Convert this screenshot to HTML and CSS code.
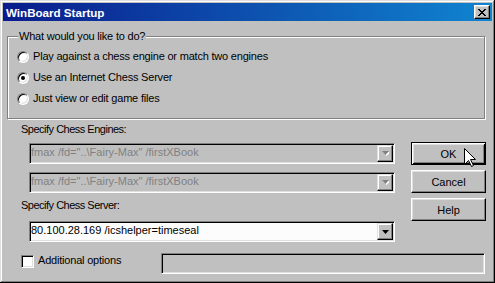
FILE: index.html
```html
<!DOCTYPE html>
<html lang="en">
<head>
  <meta charset="UTF-8">
  <title>WinBoard Startup</title>
  <link rel="stylesheet" href="styles.css">
</head>
<body>
  <div class="window">
    <div class="titlebar">
      <span class="title">WinBoard Startup</span>
      <button class="close">
        <svg width="8" height="7" viewBox="0 0 8 7"><path d="M0 0h2v1h-2zM6 0h2v1h-2zM1 1h2v1h-2zM5 1h2v1h-2zM2 2h4v1h-4zM3 3h2v1h-2zM2 4h4v1h-4zM1 5h2v1h-2zM5 5h2v1h-2zM0 6h2v1h-2zM6 6h2v1h-2z" fill="#000"/></svg>
      </button>
    </div>

    <!-- mode choice -->
    <div class="group">
      <div class="legend">What would you like to do?</div>
      <div class="radio-row"><span class="radio"></span>Play against a chess engine or match two engines</div>
      <div class="radio-row"><span class="radio checked"></span>Use an Internet Chess Server</div>
      <div class="radio-row"><span class="radio"></span>Just view or edit game files</div>
    </div>

    <div class="lower">
      <div class="fields">
        <div class="caption">Specify Chess Engines:</div>
        <div class="combo disabled first">
          <span class="combo-text">fmax /fd="..\Fairy-Max" /firstXBook</span>
          <span class="drop"><svg width="7" height="5" viewBox="0 0 7 5"><path d="M1 1h7l-3.5 4z" fill="#fff"/><path d="M0 0h7l-3.5 4z" fill="#808080"/></svg></span>
        </div>
        <div class="combo disabled">
          <span class="combo-text">fmax /fd="..\Fairy-Max" /firstXBook</span>
          <span class="drop"><svg width="7" height="5" viewBox="0 0 7 5"><path d="M1 1h7l-3.5 4z" fill="#fff"/><path d="M0 0h7l-3.5 4z" fill="#808080"/></svg></span>
        </div>
        <div class="caption second">Specify Chess Server:</div>
        <div class="combo server">
          <span class="combo-text">80.100.28.169 /icshelper=timeseal</span>
          <span class="drop"><svg width="7" height="4" viewBox="0 0 7 4"><path d="M0 0h7l-3.5 4z" fill="#000"/></svg></span>
        </div>
      </div>
      <div class="buttons">
        <button class="btn default">OK</button>
        <button class="btn">Cancel</button>
        <button class="btn">Help</button>
      </div>
    </div>

    <div class="options">
      <span class="check"></span>
      <span class="check-label">Additional options</span>
      <div class="edit"></div>
    </div>

    <!-- mouse pointer over OK -->
    <svg class="cursor" width="12" height="20" viewBox="0 0 12 20">
      <path d="M0.5 0.5V16.5L4.5 12.5L7.5 18.5L9.5 17.5L6.5 11.5H11.5Z" fill="#fff" stroke="#000" stroke-width="1"/>
    </svg>
  </div>
</body>
</html>
```
FILE: styles.css
```css
body {
  margin: 0;
  font-family: "Liberation Sans", Arial, sans-serif;
  font-size: 11px;
  color: #000;
}

.window {
  position: relative;
  width: 495px;
  height: 283px;
  box-sizing: border-box;
  padding: 3px;
  background: #c0c0c0;
  box-shadow: inset -1px -1px 0 #000, inset 1px 1px 0 #dfdfdf,
              inset -2px -2px 0 #808080, inset 2px 2px 0 #fff;
}

.titlebar {
  height: 18px;
  display: flex;
  align-items: center;
  justify-content: space-between;
  padding: 0 2px 0 3px;
  background: linear-gradient(to right, #0a1c8c, #1084d0);
  color: #fff;
}

.title {
  font-weight: bold;
  font-size: 11.6px;
}

.close {
  width: 16px;
  height: 14px;
  padding: 0;
  margin: 0;
  display: flex;
  align-items: center;
  justify-content: center;
  background: #c0c0c0;
  border: 1px solid;
  border-color: #fff #000 #000 #fff;
  box-shadow: inset -1px -1px 0 #808080, inset 1px 1px 0 #dfdfdf;
}

/* group box */
.group {
  margin: 15px 7px 0 4px;
  padding: 0 0 9px 9px;
  border: 1px solid #808080;
  box-shadow: 1px 1px 0 #fff, inset 1px 1px 0 #fff;
  letter-spacing: -0.2px;
}

.legend {
  width: fit-content;
  margin: -7px 0 3px 1px;
  padding: 0 1px;
  line-height: 13px;
  background: #c0c0c0;
}

.radio-row {
  height: 21px;
  display: flex;
  align-items: center;
  gap: 4px;
  line-height: 13px;
}

.radio {
  position: relative;
  width: 12px;
  height: 12px;
  box-sizing: border-box;
  border-radius: 50%;
  border: 1px solid;
  border-color: #808080 #fff #fff #808080;
  background: #fff;
  box-shadow: inset 1px 1px 0 #000, inset -1px -1px 0 #dfdfdf;
}

.radio.checked::after {
  content: "";
  position: absolute;
  left: 3px;
  top: 3px;
  width: 4px;
  height: 4px;
  border-radius: 50%;
  background: #000;
}

/* engines / server */
.lower {
  display: flex;
  gap: 16px;
  margin-top: 4px;
  padding: 0 6px 0 18px;
}

.fields {
  width: 374px;
}

.caption {
  line-height: 13px;
  letter-spacing: -0.5px;
}

.caption.second {
  margin-top: 6px;
}

.combo {
  height: 21px;
  box-sizing: border-box;
  margin: 8px 0 0 8px;
  padding: 1px;
  display: flex;
  border: 1px solid;
  border-color: #808080 #fff #fff #808080;
  box-shadow: inset 1px 1px 0 #000, inset -1px -1px 0 #dfdfdf;
  background: #c0c0c0;
}

.combo.first {
  margin-top: 7px;
}

.combo.server {
  margin-top: 9px;
  background: #fcfcfc;
}

.combo-text {
  flex: 1;
  line-height: 15px;
  white-space: nowrap;
}

.combo.disabled .combo-text {
  color: #808080;
}

.drop {
  width: 16px;
  height: 17px;
  box-sizing: border-box;
  display: flex;
  align-items: center;
  justify-content: center;
  background: #c0c0c0;
  border: 1px solid;
  border-color: #dfdfdf #000 #000 #dfdfdf;
  box-shadow: inset -1px -1px 0 #808080, inset 1px 1px 0 #fff;
}

.buttons {
  display: flex;
  flex-direction: column;
  gap: 5px;
  padding-top: 19px;
}

.btn {
  width: 75px;
  height: 23px;
  margin: 0;
  padding: 0;
  font-family: inherit;
  font-size: 11px;
  color: #000;
  background: #c0c0c0;
  border: 1px solid;
  border-color: #fff #000 #000 #fff;
  box-shadow: inset -1px -1px 0 #808080, inset 1px 1px 0 #dfdfdf;
}

.btn.default {
  border-color: #000;
  box-shadow: inset 1px 1px 0 #fff, inset -1px -1px 0 #000,
              inset 2px 2px 0 #dfdfdf, inset -2px -2px 0 #808080;
}

/* additional options */
.options {
  display: flex;
  align-items: flex-start;
  margin-top: 11px;
  padding: 0 7px 0 18px;
}

.check {
  width: 13px;
  height: 13px;
  box-sizing: border-box;
  margin-top: 2px;
  border: 1px solid;
  border-color: #808080 #fff #fff #808080;
  background: #fff;
  box-shadow: inset 1px 1px 0 #000, inset -1px -1px 0 #dfdfdf;
}

.check-label {
  margin: 1px 0 0 4px;
  line-height: 13px;
  letter-spacing: -0.2px;
}

.edit {
  width: 324px;
  height: 21px;
  box-sizing: border-box;
  margin-left: auto;
  border: 1px solid;
  border-color: #808080 #fff #fff #808080;
  box-shadow: inset 1px 1px 0 #000, inset -1px -1px 0 #dfdfdf;
}

.cursor {
  position: absolute;
  left: 464px;
  top: 148px;
}
```
